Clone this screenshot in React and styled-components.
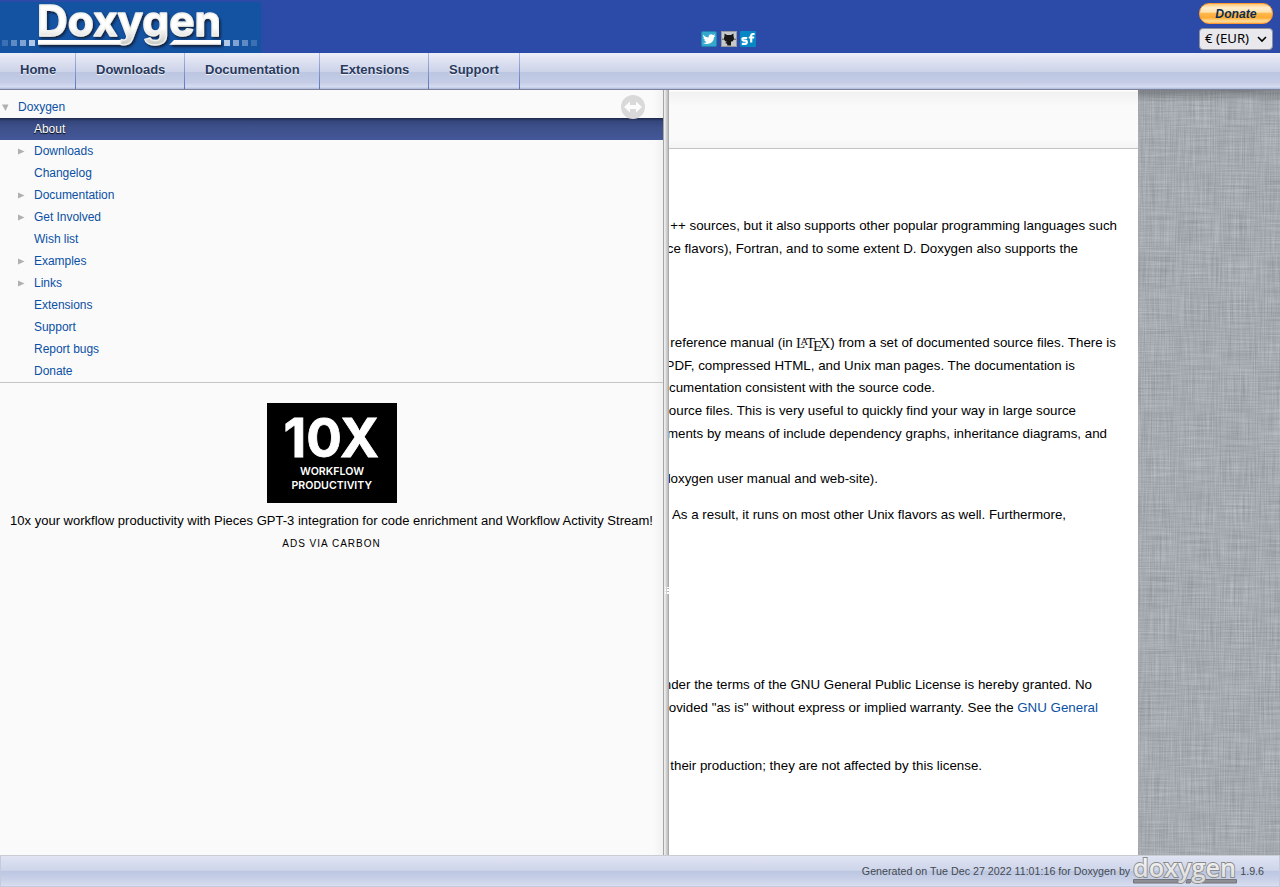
import React from "react";
import styled, { createGlobalStyle } from "styled-components";

const Global = createGlobalStyle`
  * { box-sizing: border-box; }
  body { margin: 0; font-family: "Liberation Sans", Arial, sans-serif; overflow: hidden; }
`;
const Page = styled.div`
  width: 1280px; height: 887px; display: flex; flex-direction: column; background: #fff;
`;
const Header = styled.header`
  height: 53px; flex: none; display: flex; align-items: flex-start; background: #2c4aa8;
`;
const Logo = styled.svg`display: block; margin-top: 2px; width: 261px; height: 51px;`;
const Socials = styled.div`
  display: flex; gap: 3.5px; margin: 31px 0 0 440px;
  svg { display: block; width: 16px; height: 16px; }
`;
const DonateBox = styled.div`
  margin: 3px 7px 0 auto; width: 74px; display: flex; flex-direction: column; gap: 4px;
`;
const DonateButton = styled.button`
  height: 21px; padding: 0; border: 1px solid #ff9933; border-radius: 10px;
  background: linear-gradient(#ffc877 0, #ffedcc 20%, #ffe3b0 42%, #ffb84d 50%, #ffac33 72%, #ffdc9a 90%, #ffc066 100%);
  color: #0c2d52; font: italic bold 12.2px "Liberation Sans", sans-serif;
`;
const Currency = styled.div`
  height: 22px; border: 1px solid #8f8f9d; border-radius: 4px; background: #e9e9ed;
  display: flex; align-items: center; justify-content: space-between; padding: 0 5px 2px 5px;
  color: #000; font: 13.2px "Noto Sans", sans-serif; white-space: nowrap;
  svg { width: 10px; height: 7px; margin-top: 2px; }
`;
const Nav = styled.nav`
  height: 37px; flex: none; display: flex; border-bottom: 1px solid #80829a;
  background: linear-gradient(#eceef7 0, #d9ddee 30%, #cdd3e9 52%, #bcc6e1 54%, #c5cde6 82%, #d6dcf0 94%, #aab8dc 100%);
`;
const NavItem = styled.a`
  height: 36px; padding: 0 19px 0 20px; line-height: 34px; font-size: 13px; font-weight: bold;
  color: #283a5d; text-shadow: 0 1px 1px rgba(255,255,255,.9); white-space: nowrap;
  border-right: 1px solid; border-image: linear-gradient(#b0bce0, #5a74be) 1;
  width: ${p => p.$w}px;
`;
const Body = styled.div`height: 765px; flex: none; display: flex; overflow: hidden;`;
const Sidebar = styled.aside`
  position: relative; width: 663px; flex: none; display: flex; flex-direction: column;
  background: linear-gradient(90deg, transparent 654px, #f1f1f1 663px), #fafafa;
`;
const Tree = styled.div`padding-top: 6px; height: 293px; border-bottom: 1px solid #c4c4c4;`;
const Row = styled.div`
  display: flex; align-items: center; height: 22px; font-size: 12px; padding-left: ${p => p.$root ? 0 : 16}px;
  color: ${p => p.$sel ? "#fff" : "#0a50a4"}; letter-spacing: -.03px;
  ${p => p.$sel && `background: linear-gradient(#1d2848 0, #34457c 3px, #3d5089 9px, #43579a 100%); text-shadow: 0 1px 1px #000;`}
`;
const Arrow = styled.span`
  width: 18px; flex: none; display: flex; padding: 2px 0 0 2px;
  svg { width: 8px; height: 8px; }
`;
const Sync = styled.svg`position: absolute; left: 621px; top: 5px; width: 24px; height: 24px;`;
const Ad = styled.div`display: flex; flex-direction: column; align-items: center; padding-top: 20px;`;
const AdImage = styled.div`
  width: 130px; height: 100px; background: #000;
  svg { display: block; width: 130px; height: 100px; }
`;
const AdText = styled.div`font-size: 13.03px; line-height: 20px; margin-top: 8px; color: #000; white-space: nowrap;`;
const AdVia = styled.div`font-size: 10px; letter-spacing: 1px; line-height: 14px; margin-top: 6px;`;
const Splitter = styled.div`
  width: 6px; flex: none; display: flex; align-items: center; padding-top: 236px;
  background: linear-gradient(90deg, #a5a5a5 0 1px, #ececec 1px 2px, #e2e2e2 2px 3px, #cfcfcf 3px 4px, #c2c2c2 4px 5px, #aaa 5px);
  svg { width: 4px; height: 8px; margin-left: 2px; flex: none; }
`;
const Doc = styled.main`width: 469px; flex: none; background: #fff; overflow: hidden;`;
const DocHeader = styled.div`
  height: 59px; border-bottom: 1px solid #c4c4c4;
  background: linear-gradient(#fff 1px, #f1f1f1 2px, #fafafa 16px, #fafafa 50px, #f3f3f3);
`;
const Para = styled.div`padding-top: ${p => p.$top}px;`;
const Line = styled.div`
  display: flex; justify-content: flex-end; align-items: center; white-space: pre; height: 22.7px;
  padding-right: ${p => 1138 - p.$right}px; font-size: 13.333px; color: #000;
`;
const Link = styled.a`color: #0a50a4;`;
const Latex = styled.svg`width: 34px; height: 18px; flex: none; overflow: visible; font-family: "Liberation Serif", serif;`;
const Linen = styled.svg`flex: 1; height: 765px; display: block;`;
const Footer = styled.footer`
  height: 32px; flex: none; border: 1px solid #c4cbdf; border-top-color: #c9ccd5;
  background: linear-gradient(#e0e4f3 0, #ced5ea 48%, #bbc6e1 50%, #c9d1e8 78%, #d9def0 100%);
  display: flex; justify-content: flex-end; align-items: center; gap: 3px; padding-right: 15px;
  font-size: 10.7px; color: #444950; white-space: nowrap;
  svg { width: 104px; height: 28px; display: block; }
`;

const tree = [
  ["Doxygen", "open"], ["About", "", true], ["Downloads", "more"], ["Changelog"], ["Documentation", "more"],
  ["Get Involved", "more"], ["Wish list"], ["Examples", "more"], ["Links", "more"], ["Extensions"],
  ["Support"], ["Report bugs"], ["Donate"],
];
const nav = [["Home", 76], ["Downloads", 109], ["Documentation", 135], ["Extensions", 109], ["Support", 91]];
const dots = [[2, .2], [11, .38], [20, .55], [29, .8], [224, .8], [233, .55], [242, .38], [251, .2]];

function DoxygenLogo() {
  return (
    <Logo viewBox="0 2 261 51">
      <defs>
        <linearGradient id="metal" x2="0" y2="1"><stop stopColor="#fff" /><stop offset=".65" stopColor="#fff" /><stop offset="1" stopColor="#c4c4c0" /></linearGradient>
        <filter id="sh" x="-10%" y="-20%" width="120%" height="150%"><feDropShadow dx="1.5" dy="2" stdDeviation="1.3" floodColor="#07182d" floodOpacity=".85" /></filter>
      </defs>
      <rect y="2" width="261" height="51" fill="#1453a2" />
      {dots.map(([x, o]) => <rect key={x} x={x} y="40" width="6" height="6" fill="#d9e6fa" opacity={o} />)}
      <g filter="url(#sh)">
        <path d="M38 40H121V45H38zM174 40H221V45H169z" fill="url(#metal)" />
        <text x="37" y="35.5" textLength="184" lengthAdjust="spacingAndGlyphs" fontFamily="Inter" fontWeight="700" fontSize="42" fill="url(#metal)" stroke="#f0f0ed" strokeWidth="1.4" strokeLinejoin="round">Doxygen</text>
      </g>
    </Logo>
  );
}
function SocialIcons() {
  return (
    <Socials>
      <svg viewBox="0 0 16 16"><rect x=".5" y=".5" width="15" height="15" rx="1.5" fill="#35a9cb" stroke="#2582b0" /><path d="M2 3.7Q4.5 6.4 7.6 6.4C7.2 3.4 10.2 2.3 12 4L14 3.3 13.2 5 14.3 5 12.9 6.5C12.8 11.8 7 14.5 2 12Q4.5 12 5.6 10.9Q3.7 10.6 3.3 9L4.3 8.9Q2.4 8 2.3 6.4L3.2 6.6Q1.7 5.3 2 3.7Z" fill="#fff" /></svg>
      <svg viewBox="0 0 16 16"><rect x=".5" y=".5" width="15" height="15" fill="#c7c8ca" stroke="#98999f" /><path d="M1 7.5H15V9H1Z" fill="#777" /><path d="M3.5 2.5L6 4H10L12.5 2.5V5.2C13.7 7.6 12.6 10.4 10 10.8V14.5H6.2V12.7L4 12 6 10.8C3.4 10.4 2.3 7.6 3.5 5.2Z" fill="#171717" /></svg>
      <svg viewBox="0 0 16 16"><rect width="16" height="16" rx="1" fill="#0788c5" /><path d="M7.2 7H3.7Q2.4 7 2.4 8.3T3.7 9.7H5.5Q6.8 9.7 6.8 11.2T5.5 12.8H1.8M14.6 3H13Q11.2 3 11.2 5V11.5M8.8 6.5H14.2" fill="none" stroke="#fff" strokeWidth="2.2" /></svg>
    </Socials>
  );
}
function FooterLogo() {
  return (
    <svg viewBox="0 0 104 28">
      <defs><linearGradient id="silver" x2="0" y2="1"><stop stopColor="#fff" /><stop offset="1" stopColor="#d8d8d8" /></linearGradient></defs>
      <path d="M.5 22.5H45V26H.5zM54 22.5H59L57 26H53zM70 22.5H103.5V26H69z" fill="#8d8f94" stroke="#73757a" />
      <text x="0" y="19.5" textLength="103" lengthAdjust="spacingAndGlyphs" fontFamily="Open Sans" fontWeight="600" fontSize="25" fill="url(#silver)" stroke="#8a8a8a" strokeWidth="1.8" paintOrder="stroke">doxygen</text>
    </svg>
  );
}
function LatexMark() {
  return (
    <Latex viewBox="0 0 34 18" fill="#111">
      <text x="0" y="14" fontSize="15">L</text>
      <text x="4.6" y="11" fontSize="10.5">A</text>
      <text x="10" y="14" fontSize="15">T</text>
      <text x="17" y="17" fontSize="15">E</text>
      <text x="23.5" y="14" fontSize="15">X</text>
    </Latex>
  );
}

export default function App() {
  return (
    <Page>
      <Global />
      <Header>
        <DoxygenLogo />
        <SocialIcons />
        <DonateBox>
          <DonateButton>Donate</DonateButton>
          <Currency>€ (EUR)<svg viewBox="0 0 10 7"><path d="M1 1L5 5 9 1" fill="none" stroke="#000" strokeWidth="1.6" /></svg></Currency>
        </DonateBox>
      </Header>
      <Nav>{nav.map(([n, w]) => <NavItem key={n} $w={w}>{n}</NavItem>)}</Nav>
      <Body>
        <Sidebar>
          <Tree>
            {tree.map(([name, arrow, sel]) => (
              <Row key={name} $root={arrow === "open"} $sel={sel}>
                <Arrow>{arrow && <svg viewBox="0 0 8 8"><path d={arrow === "open" ? "M0 .5H6.5L3.5 7Z" : "M0 .5L6.5 3.5 0 6.5Z"} fill="#b0b0b0" /></svg>}</Arrow>
                <span>{name}</span>
              </Row>
            ))}
          </Tree>
          <Sync viewBox="0 0 24 24"><circle cx="12" cy="12" r="12" fill="#d9d9d9" /><path d="M3 12L9 6.5V10H15V6.5L21 12 15 17.5V14H9V17.5Z" fill="#fcfcfc" /></Sync>
          <Ad>
            <AdImage>
              <svg viewBox="0 0 130 100" fill="#fff" fontFamily="Inter" fontWeight="600">
                <text x="16.5" y="53.8" fontSize="53.5" fontWeight="700" stroke="#fff" strokeWidth=".8" textLength="95.5" lengthAdjust="spacingAndGlyphs">10X</text>
                <text x="33" y="72" fontSize="11" textLength="64" lengthAdjust="spacingAndGlyphs">WORKFLOW</text>
                <text x="24.5" y="86" fontSize="11" textLength="80.5" lengthAdjust="spacingAndGlyphs">PRODUCTIVITY</text>
              </svg>
            </AdImage>
            <AdText>10x your workflow productivity with Pieces GPT-3 integration for code enrichment and Workflow Activity Stream!</AdText>
            <AdVia>ADS VIA CARBON</AdVia>
          </Ad>
        </Sidebar>
        <Splitter><svg viewBox="0 0 4 8"><path d="M0 0H1V1H0zM2 0H4V1H2zM0 2H1V4H0zM2 2H4V4H2zM0 5H1V7H0zM2 5H4V7H2z" fill="#fff" /></svg></Splitter>
        <Doc>
          <DocHeader />
          <Para $top={65}>
            <Line $right={1117}>++ sources, but it also supports other popular programming languages such</Line>
            <Line $right={1078}>Microsoft, and UNO/OpenOffice flavors), Fortran, and to some extent D. Doxygen also supports the</Line>
          </Para>
          <Para $top={71.8}>
            <Line $right={1116}>reference manual (in <LatexMark />) from a set of documented source files. There is</Line>
            <Line $right={1075}>PDF, compressed HTML, and Unix man pages. The documentation is</Line>
            <Line $right={935}>documentation consistent with the source code.</Line>
            <Line $right={1076}>source files. This is very useful to quickly find your way in large source</Line>
            <Line $right={1107}>elements by means of include dependency graphs, inheritance diagrams, and</Line>
          </Para>
          <Para $top={22.5}><Line $right={878}>doxygen user manual and web-site).</Line></Para>
          <Para $top={13.3}><Line $right={1066}>Linux. As a result, it runs on most other Unix flavors as well. Furthermore,</Line></Para>
          <Para $top={147.3}>
            <Line $right={1092}>under the terms of the GNU General Public License is hereby granted. No</Line>
            <Line $right={1098}>provided "as is" without express or implied warranty. See the <Link>GNU General</Link></Line>
          </Para>
          <Para $top={35.3}><Line $right={982}>their production; they are not affected by this license.</Line></Para>
        </Doc>
        <Linen viewBox="0 0 142 765" preserveAspectRatio="none">
          <defs>
            <filter id="weft" x="0" y="0" width="100%" height="100%" colorInterpolationFilters="sRGB"><feTurbulence type="fractalNoise" baseFrequency=".025 .8" numOctaves="2" seed="4" /><feColorMatrix values=".28 0 0 0 .508  .28 0 0 0 .53  .28 0 0 0 .552  0 0 0 0 1" /></filter>
            <filter id="warp" x="0" y="0" width="100%" height="100%" colorInterpolationFilters="sRGB"><feTurbulence type="fractalNoise" baseFrequency=".8 .025" numOctaves="2" seed="9" /><feColorMatrix values=".28 0 0 0 .508  .28 0 0 0 .53  .28 0 0 0 .552  0 0 0 0 1" /></filter>
            <linearGradient id="shade" x2="0" y2="1"><stop stopColor="#000" stopOpacity=".25" /><stop offset="1" stopColor="#000" stopOpacity="0" /></linearGradient>
          </defs>
          <rect width="142" height="765" filter="url(#weft)" />
          <rect width="142" height="765" filter="url(#warp)" opacity=".5" />
          <rect width="142" height="12" fill="url(#shade)" />
        </Linen>
      </Body>
      <Footer><span>Generated on Tue Dec 27 2022 11:01:16 for Doxygen by</span><FooterLogo /><span>1.9.6</span></Footer>
    </Page>
  );
}
